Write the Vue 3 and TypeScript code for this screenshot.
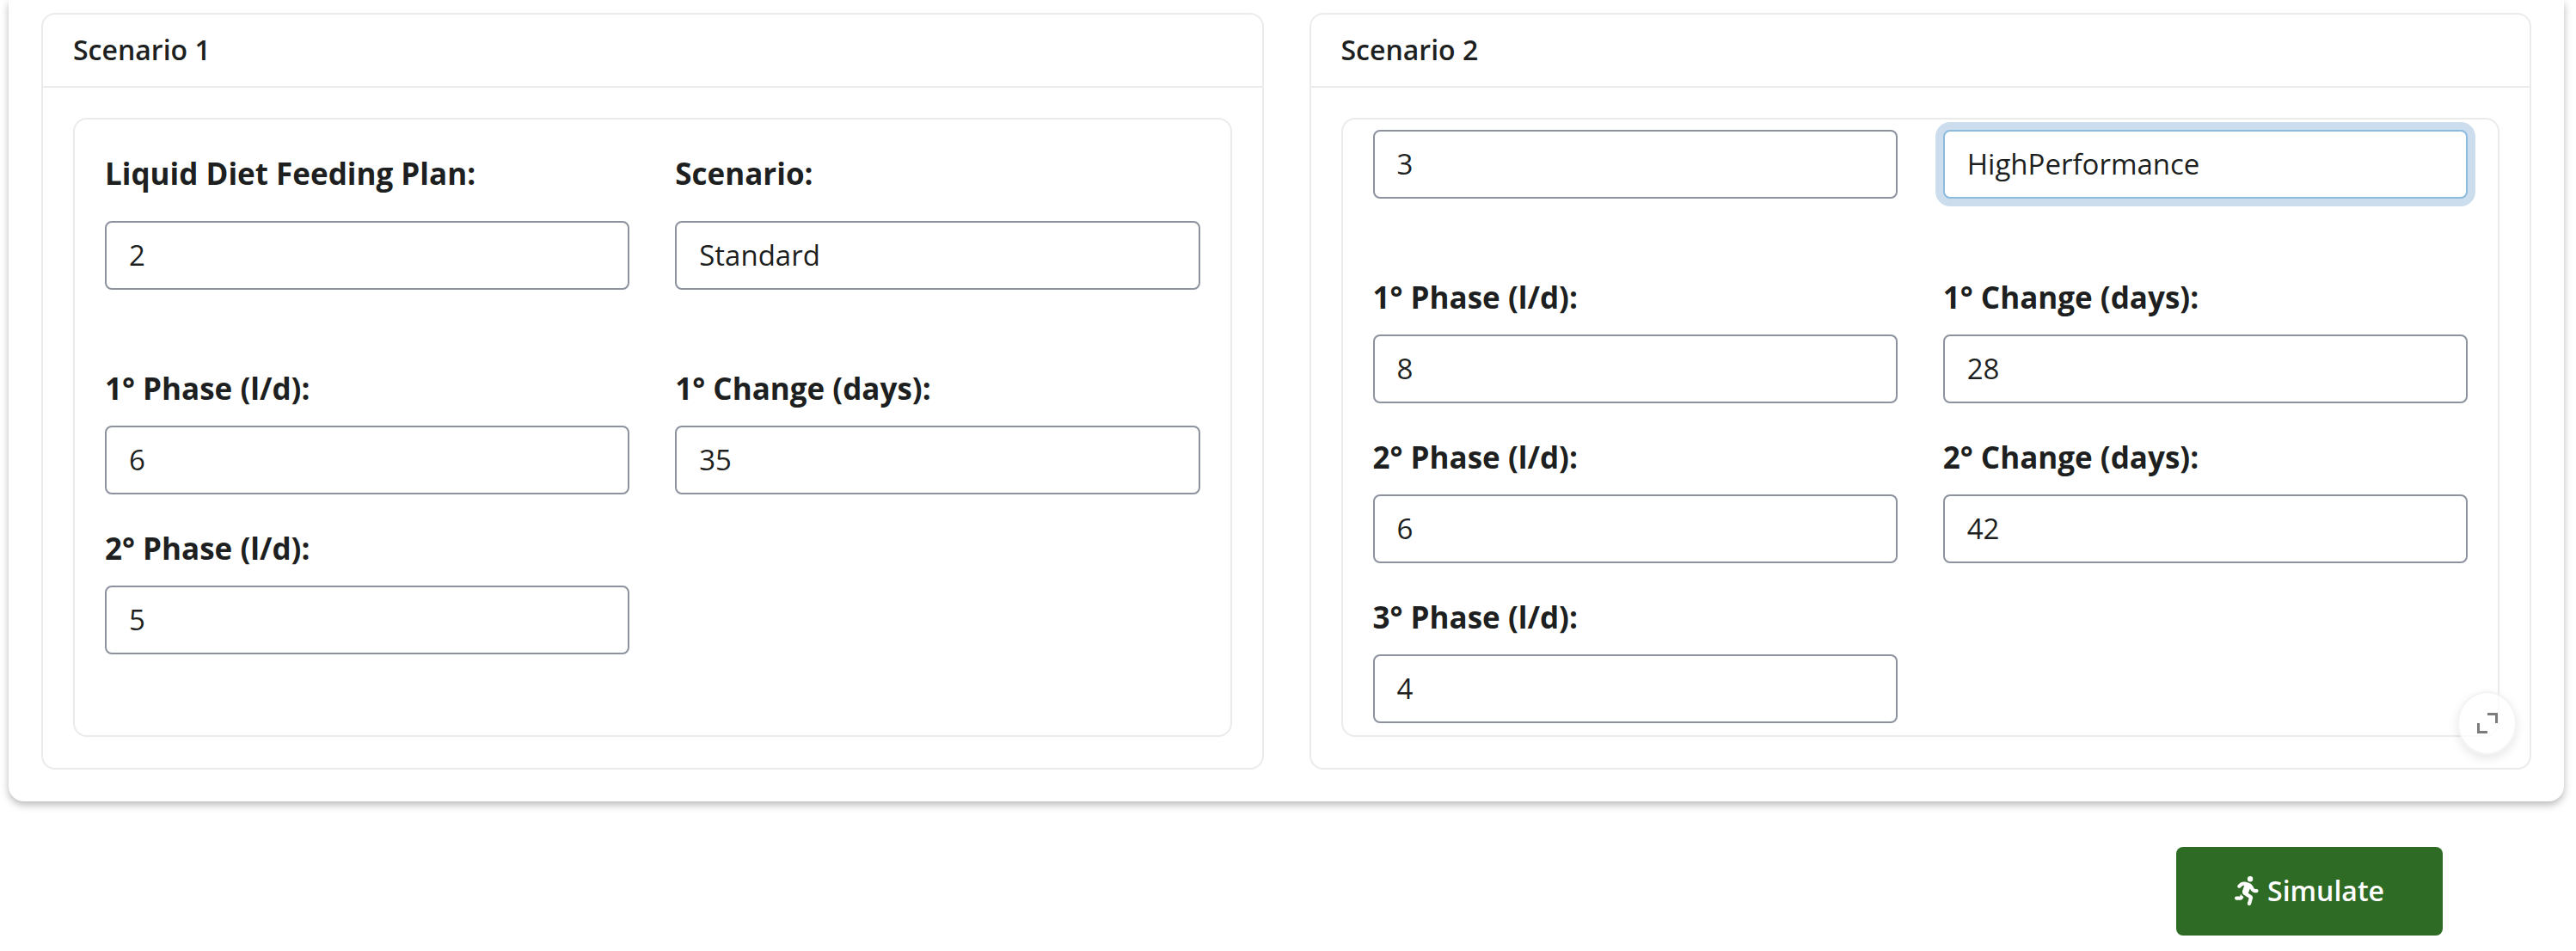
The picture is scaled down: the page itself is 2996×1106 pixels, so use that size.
<script setup lang="ts">
import { onMounted, ref } from 'vue'

interface Field {
  id: string
  label: string
  value: string
  active?: boolean
}

interface Scenario {
  title: string
  plan: Field[]
  planLabels: boolean
  phases: Field[]
  scroll: number
}

const scenarios = ref<Scenario[]>([
  {
    title: 'Scenario 1',
    scroll: 0,
    planLabels: true,
    plan: [
      { id: 's1-plan', label: 'Liquid Diet Feeding Plan:', value: '2' },
      { id: 's1-scenario', label: 'Scenario:', value: 'Standard' },
    ],
    phases: [
      { id: 's1-phase1', label: '1° Phase (l/d):', value: '6' },
      { id: 's1-change1', label: '1° Change (days):', value: '35' },
      { id: 's1-phase2', label: '2° Phase (l/d):', value: '5' },
    ],
  },
  {
    title: 'Scenario 2',
    scroll: 22,
    planLabels: false,
    plan: [
      { id: 's2-plan', label: 'Liquid Diet Feeding Plan:', value: '3' },
      { id: 's2-scenario', label: 'Scenario:', value: 'HighPerformance', active: true },
    ],
    phases: [
      { id: 's2-phase1', label: '1° Phase (l/d):', value: '8' },
      { id: 's2-change1', label: '1° Change (days):', value: '28' },
      { id: 's2-phase2', label: '2° Phase (l/d):', value: '6' },
      { id: 's2-change2', label: '2° Change (days):', value: '42' },
      { id: 's2-phase3', label: '3° Phase (l/d):', value: '4' },
    ],
  },
])

const panels = ref<HTMLElement[]>([])

onMounted(() => {
  panels.value.forEach((panel, i) => {
    panel.scrollTop = scenarios.value[i].scroll
  })
})
</script>

<template>
  <main class="page">
    <div class="sheet">
      <section v-for="scenario in scenarios" :key="scenario.title" class="card">
        <h2 class="card-header">{{ scenario.title }}</h2>
        <div class="card-body">
          <div ref="panels" class="panel">
            <div class="grid plan">
              <div v-for="field in scenario.plan" :key="field.id" class="field">
                <label v-if="scenario.planLabels" :for="field.id">{{ field.label }}</label>
                <input
                  :id="field.id"
                  v-model="field.value"
                  type="text"
                  :aria-label="field.label"
                  :class="{ active: field.active }"
                />
              </div>
            </div>
            <div class="grid phases">
              <div v-for="field in scenario.phases" :key="field.id" class="field">
                <label :for="field.id">{{ field.label }}</label>
                <input :id="field.id" v-model="field.value" type="text" />
              </div>
            </div>
          </div>
        </div>
      </section>
      <button class="expand" type="button" aria-label="Expand">
        <svg viewBox="0 0 24 24" fill="none" stroke="currentColor" stroke-width="3">
          <path d="M12 1.5H22.5V12M1.5 12V22.5H12" />
        </svg>
      </button>
    </div>
    <div class="actions">
      <button class="simulate" type="button">
        <svg viewBox="0 0 416 512" fill="currentColor" aria-hidden="true">
          <path
            d="M320 48a48 48 0 1 0 -96 0 48 48 0 1 0 96 0zM125.700 175.500c9.900-9.900 23.400-15.500 37.500-15.500c1.900 0 3.800 .1 5.600 .3L137.600 254c-9.300 28 1.700 58.800 26.800 74.500l86.200 53.900-25.400 88.800c-4.900 17 5 34.700 22 39.600s34.700-5 39.600-22l28.700-100.400c5.900-20.600-2.600-42.600-20.700-53.900L238 299l30.900-82.400 5.100 12.300C289 264.700 323.900 288 362.700 288H384c17.700 0 32-14.300 32-32s-14.300-32-32-32H362.700c-12.900 0-24.600-7.800-29.500-19.700l-6.300-15c-14.600-35.100-44.100-61.900-80.500-73.100l-48.700-15c-11.100-3.400-22.700-5.200-34.400-5.200c-31 0-60.800 12.300-82.700 34.300L57.400 153.400c-12.500 12.500-12.500 32.800 0 45.300s32.800 12.500 45.300 0l23.100-23.100zM91.200 352H32c-17.700 0-32 14.300-32 32s14.300 32 32 32h69.600c19 0 36.200-11.200 43.900-28.500L157 361.600l-9.500-6c-17.500-10.900-30.500-26.800-37.900-44.900L91.200 352z"
          />
        </svg>
        <span>Simulate</span>
      </button>
    </div>
  </main>
</template>

<style>
body {
  background: #fff;
}
</style>

<style scoped>
.page,
.page * {
  box-sizing: border-box;
}

.page {
  font-family: 'Open Sans', 'Noto Sans', sans-serif;
  font-size: 33px;
  color: #1d1f21;
  padding: 0 14px 18px 10px;
}

.sheet {
  position: relative;
  display: grid;
  grid-template-columns: 1fr 1fr;
  gap: 53px;
  padding: 15px 38px 37px;
  background: #fff;
  border-radius: 0 0 18px 18px;
  box-shadow: 0 4px 10px rgba(0, 0, 0, 0.28);
}

.card {
  border: 2px solid #ebebeb;
  border-radius: 16px;
  min-width: 0;
}

.card-header {
  margin: 0;
  padding: 17px 35px 18px;
  font-size: 32px;
  line-height: 48px;
  font-weight: 600;
  border-bottom: 2px solid #ebebeb;
}

.card-body {
  padding: 35px 35px 36px;
}

.panel {
  height: 720px;
  padding: 34px 35px;
  border: 2px solid #ebebeb;
  border-radius: 16px;
  overflow-y: auto;
  scrollbar-width: none;
}

.grid {
  display: grid;
  grid-template-columns: 1fr 1fr;
  column-gap: 53px;
}

.phases {
  row-gap: 34px;
  margin-top: 86px;
}

.field {
  display: flex;
  flex-direction: column;
  gap: 14px;
}

.plan .field {
  gap: 26px;
}

label {
  font-size: 35px;
  line-height: 58px;
  font-weight: 700;
}

input {
  width: 100%;
  height: 80px;
  margin: 0;
  padding: 0 26px 2px;
  border: 2px solid #8c939e;
  border-radius: 8px;
  background: #fff;
  color: inherit;
  font: inherit;
  outline: none;
}

input.active {
  border-color: #8dbbdd;
  box-shadow: 0 0 0 9px #ccdded;
}

.expand {
  position: absolute;
  right: 55px;
  bottom: 54px;
  display: flex;
  align-items: center;
  justify-content: center;
  width: 69px;
  height: 74px;
  padding: 0;
  border: 2px solid #f3f3f4;
  border-radius: 50%;
  background: rgba(255, 255, 255, 0.8);
  color: #7c7c7c;
  box-shadow: 0 4px 12px rgba(0, 0, 0, 0.1);
}

.expand svg {
  width: 24px;
  height: 24px;
}

.actions {
  display: flex;
  justify-content: flex-end;
  padding: 53px 141px 0 0;
}

.simulate {
  display: flex;
  align-items: center;
  justify-content: center;
  gap: 10px;
  height: 103px;
  padding: 0 68px 2px;
  border: 0;
  border-radius: 8px;
  background: #2e6b24;
  color: #fff;
  font: inherit;
  font-size: 32px;
  font-weight: 600;
}

.simulate svg {
  height: 34px;
}
</style>
